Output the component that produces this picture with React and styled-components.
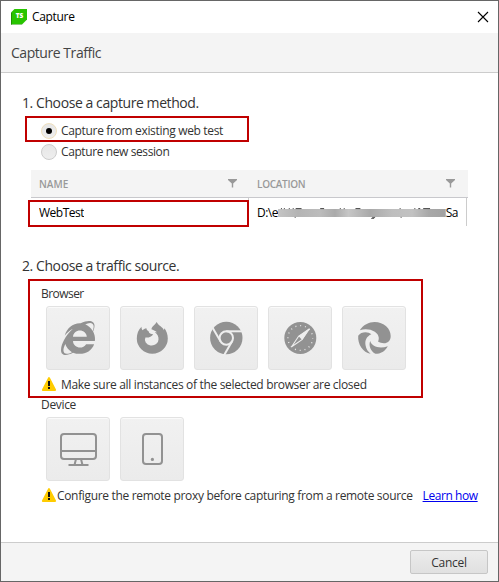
import React from 'react';
import styled, { createGlobalStyle } from 'styled-components';
import { FaInternetExplorer } from 'react-icons/fa';

const GlobalStyle = createGlobalStyle`
  * { box-sizing: border-box; }
  body { margin: 0; background: #fff; }
`;

const Dialog = styled.div`
  position: relative;
  display: flex;
  flex-direction: column;
  width: 499px;
  height: 582px;
  border: 1px solid #666;
  background: #fff;
  color: #333;
  font: 12px/16px 'Open Sans', 'Noto Sans', sans-serif;
  letter-spacing: -0.33px;
  white-space: nowrap;
  overflow: hidden;
`;

const TitleBar = styled.header`
  display: flex;
  align-items: center;
  flex: none;
  height: 32px;
  padding: 0 9px 0 10px;
  color: #000;
`;

const TitleText = styled.span`
  flex: 1;
  margin-left: 5px;
`;

const Logo = styled.span`
  display: flex;
  align-items: center;
  justify-content: center;
  width: 16px;
  height: 16px;
  margin-top: -1px;
  background: linear-gradient(135deg, #28c400 0 86%, #178400 86%);
  clip-path: polygon(4px 0, 16px 0, 16px 11px, 11px 16px, 0 16px, 0 4px);
  border-left: 1px solid #1c9200;
  border-bottom: 1px solid #1c9200;
  color: #fff;
  font-size: 6.5px;
  font-weight: 800;
  line-height: 8px;
  letter-spacing: 0;
`;

const Header = styled.div`
  flex: none;
  height: 40px;
  padding: 10px;
  border-bottom: 1px solid #ccc;
  background: #f4f4f4;
  color: #444;
  font-size: 14px;
  line-height: 20px;
  letter-spacing: -0.45px;
`;

const Content = styled.main`
  flex: 1;
  padding: 20px 0 0 21px;
`;

const Heading = styled.h2`
  margin: 0;
  font-size: 14px;
  font-weight: 400;
  line-height: 20px;
  letter-spacing: -0.42px;
`;

const SecondStep = styled.div`
  padding-top: 30px;
`;

const RadioList = styled.div`
  display: flex;
  flex-direction: column;
  gap: 5px;
  padding: 10px 0 0 19px;
`;

const RadioRow = styled.label`
  display: flex;
  align-items: center;
  gap: 4px;
  height: 16px;
  letter-spacing: ${(p) => p.$spacing};
`;

const RadioDot = styled.span`
  display: flex;
  align-items: center;
  justify-content: center;
  width: 16px;
  height: 16px;
  border: 1px solid ${(p) => (p.$on ? '#eedfbd' : '#ccc')};
  border-radius: 50%;
  background: linear-gradient(#e6e6e6, #eee);

  &::after {
    content: '';
    width: 6px;
    height: 6px;
    border-radius: 50%;
    background: ${(p) => (p.$on ? '#000' : 'transparent')};
  }
`;

const Table = styled.div`
  width: 437px;
  margin: 10px 0 0 9px;
`;

const TableHead = styled.div`
  display: grid;
  grid-template-columns: 218px 219px;
  height: 28px;
  border-bottom: 1px solid #c8c8cc;
  background: #f4f4f4;
`;

const HeadCell = styled.div`
  display: flex;
  align-items: center;
  justify-content: space-between;
  padding: ${(p) => p.$pad};
  color: #999;
  font-size: 10px;
  font-weight: 600;
  letter-spacing: ${(p) => p.$spacing};
`;

const TableRow = styled.div`
  display: grid;
  grid-template-columns: 218px 218px;
  height: 28px;
  color: #000;
`;

const Cell = styled.div`
  display: flex;
  align-items: center;
  padding: 2px 8px 0;
  border-right: 1px solid #ccc;
  letter-spacing: -0.5px;
`;

const CellText = styled.span`
  display: flex;
  align-items: center;
  overflow: hidden;
`;

const SourceGroup = styled.section`
  height: 111px;
  padding: 10px 0 0 19px;
`;

const GroupLabel = styled.div`
  height: 20px;
  line-height: 16px;
  letter-spacing: ${(p) => p.$spacing || '-0.33px'};
`;

const Tiles = styled.div`
  display: flex;
  gap: 10px;
  padding-left: 5px;
`;

const Tile = styled.button`
  display: flex;
  align-items: center;
  justify-content: center;
  width: 64px;
  height: 64px;
  padding: 0;
  border: 1px solid #e2e2e2;
  border-radius: 3px;
  background: linear-gradient(#f1f1f1, #ebebeb);
  box-shadow: inset 0 1px #fafafa;
  color: #929292;

  svg { flex: none; display: block; }
`;

const Notice = styled.div`
  display: flex;
  align-items: center;
  gap: ${(p) => p.$gap};
  height: 16px;
  margin-top: 6px;
  line-height: 16px;
  letter-spacing: -0.33px;
`;

const NoticeText = styled.span`
  padding-top: 1px;
`;

const HelpLink = styled.a`
  margin-left: 10px;
  padding-top: 1px;
  color: #0000ee;
  text-decoration: underline;
  letter-spacing: -0.43px;
`;

const Footer = styled.footer`
  display: flex;
  align-items: flex-start;
  justify-content: flex-end;
  flex: none;
  height: 39px;
  padding: 7px 10px 0 0;
  border-top: 1px solid #ccc;
  background: #f4f4f4;
`;

const CancelButton = styled.button`
  width: 78px;
  height: 24px;
  padding: 1px 0 0;
  border: 1px solid #c6c6c6;
  border-radius: 2px;
  background: linear-gradient(#ececec, #e0e0e0);
  color: #333;
  font: inherit;
  letter-spacing: -0.3px;
`;

const Highlight = styled.div`
  position: absolute;
  left: ${(p) => p.$x}px;
  top: ${(p) => p.$y}px;
  width: ${(p) => p.$w}px;
  height: ${(p) => p.$h}px;
  border: 2px solid #c00000;
  pointer-events: none;
`;

const CloseIcon = () => (
  <svg width="12" height="12" viewBox="0 0 12 12" stroke="#000" strokeWidth="1.1">
    <path d="M1 1 11 11M11 1 1 11" />
  </svg>
);

const FilterIcon = () => (
  <svg width="9" height="9" viewBox="0 0 9 9" fill="#999">
    <path d="M0 0H9V1L5.2 4.5V8.5H3.8V4.5L0 1Z" />
  </svg>
);

const WarningIcon = () => (
  <svg width="16" height="16" viewBox="0 0 16 16">
    <path d="M8 2 14.2 14H1.8Z" fill="#ffcc00" stroke="#ffcc00" strokeWidth="1.8" strokeLinejoin="round" />
    <path d="M8 5V10M8 11V13" stroke="#111" strokeWidth="2" />
  </svg>
);

const RedactedPath = () => (
  <svg width="171" height="16" viewBox="0 0 171 16">
    <defs>
      <linearGradient id="smudge">
        <stop offset="0" stopColor="#c4c4c4" />
        <stop offset=".12" stopColor="#b4b4b4" />
        <stop offset=".25" stopColor="#bcbcbc" />
        <stop offset=".34" stopColor="#aaa" />
        <stop offset=".42" stopColor="#c6c6c6" />
        <stop offset=".55" stopColor="#a9a9a9" />
        <stop offset=".68" stopColor="#bebebe" />
        <stop offset=".8" stopColor="#c2c2c2" />
        <stop offset=".9" stopColor="#a8a8a8" />
        <stop offset="1" stopColor="#a2a2a2" />
      </linearGradient>
    </defs>
    <path d="M0 4H171V12H0Z" fill="url(#smudge)" />
    <path d="M3 3.5H4M6 3.5H7M11 3.5H12M15 3.5H16M18 3.5H24M43 3.5H47M63 3.5H64M67 3.5H68M79 3.5H84M124 3.5H125M139 3.5H140M143 3.5H145M148 3.5H155" stroke="#444" />
    <path d="M17 12.5H18M96 12.5H99M95 13.5H98M125 12.5H126" stroke="#555" />
  </svg>
);

const FirefoxIcon = () => (
  <svg width="60" height="60" viewBox="0 0 60 60" fill="currentColor">
    <path d="M19.5 18.7C16.3 21.5 14.8 26 14.8 30.5A15.5 15.2 0 0 0 45.8 30.5C45.8 26.5 44.3 22.5 42.4 20.3L41.9 22.3C40.8 18.8 36.6 18 34.6 14C33 17.3 30.3 17.6 29.4 21.3C31 22 33.4 22.8 35 24.2L32.8 24.2C35.5 26 36.8 28.8 36.5 31.5A6.8 5.9 0 1 1 23.4 29.4C26 30 29.5 29 31.2 26.2C28.8 26.2 27 25.4 26.6 23.2C25.6 22.6 24.3 21.8 24.4 20.3C22.8 20.4 21.5 21.2 20.8 22.3C19.8 21.5 19.4 20.2 19.5 18.7Z" />
  </svg>
);

const ChromeIcon = () => (
  <svg width="60" height="60" viewBox="0 0 60 60">
    <circle cx="30.3" cy="30" r="16.2" fill="currentColor" />
    <g fill="none" stroke="#eee" strokeWidth="2">
      <circle cx="30.3" cy="30" r="6.7" />
      <path d="M30.3 23.3H47" />
      <path d="M30.3 23.3H47" transform="rotate(120 30.3 30)" />
      <path d="M30.3 23.3H47" transform="rotate(240 30.3 30)" />
    </g>
  </svg>
);

const SafariIcon = () => (
  <svg width="60" height="60" viewBox="0 0 60 60">
    <circle cx="30.3" cy="30" r="16" fill="currentColor" />
    <circle cx="30.3" cy="30" r="12.4" fill="none" stroke="#e8e8e8" strokeWidth="1.3" strokeDasharray="1 3.87" strokeDashoffset=".5" />
    <path d="M39.5 20.8 32.2 31.9 28.4 28.1Z" fill="#eee" />
    <path d="M39.5 20.8 32 31.7 21.6 38.7 28.6 28.3Z" fill="none" stroke="#eee" strokeWidth="1.1" />
  </svg>
);

const SwirlIcon = () => (
  <svg width="60" height="60" viewBox="0 0 60 60" fill="currentColor">
    <path d="M15.8 22.3C19 17 25 14 30.5 14C40 14 46.7 20.5 46.7 28C46.7 33 43.5 35.3 40 35.3C37.8 35.3 35.8 34.8 34 33.6C36 30 34.2 26 30.8 23.8C26.5 21 20.5 20.6 15.8 22.3Z" />
    <path d="M14.2 27.8C17 23.5 24 23.3 27.4 26.3C22.6 28.3 20.6 32.5 21.6 37.5C22.2 41 24 43.7 26.6 45.8C19 44.6 13.5 36.5 14.2 27.8Z" />
    <path d="M26.2 33C27.8 38.6 35.5 41.2 43.8 38.2C41.2 43.3 36.5 45.8 31.4 45.8C26.5 43 24.4 37.5 26.2 33Z" />
  </svg>
);

const DesktopIcon = () => (
  <svg width="60" height="60" viewBox="0 0 60 60" fill="none" stroke="currentColor" strokeWidth="2">
    <rect x="13" y="15" width="35" height="25" rx="3" />
    <path d="M13 32H48M28 40 26.5 46M33 40 34.5 46M20.5 46H40.5" />
  </svg>
);

const PhoneIcon = () => (
  <svg width="60" height="60" viewBox="0 0 60 60" fill="none" stroke="currentColor" strokeWidth="2">
    <rect x="21" y="15" width="19" height="30" rx="3" />
    <circle cx="30.4" cy="40.4" r="1.6" fill="currentColor" stroke="none" />
  </svg>
);

const browsers = [
  ['Internet Explorer', <FaInternetExplorer size={34} />],
  ['Firefox', <FirefoxIcon />],
  ['Chrome', <ChromeIcon />],
  ['Safari', <SafariIcon />],
  ['Edge', <SwirlIcon />],
];

const devices = [
  ['Desktop', <DesktopIcon />],
  ['Phone', <PhoneIcon />],
];

const TileRow = ({ items }) => (
  <Tiles>
    {items.map(([name, icon]) => (
      <Tile key={name} aria-label={name}>{icon}</Tile>
    ))}
  </Tiles>
);

export default function App() {
  return (
    <Dialog>
      <GlobalStyle />
      <TitleBar>
        <Logo>TS</Logo>
        <TitleText>Capture</TitleText>
        <CloseIcon />
      </TitleBar>
      <Header>Capture Traffic</Header>
      <Content>
        <Heading>1. Choose a capture method.</Heading>
        <RadioList>
          <RadioRow $spacing="-0.33px"><RadioDot $on />Capture from existing web test</RadioRow>
          <RadioRow $spacing="-0.4px"><RadioDot />Capture new session</RadioRow>
        </RadioList>
        <Table>
          <TableHead>
            <HeadCell $pad="0 12px 0 8px" $spacing="0">NAME<FilterIcon /></HeadCell>
            <HeadCell $pad="0 13px 0 8px" $spacing="-0.3px">LOCATION<FilterIcon /></HeadCell>
          </TableHead>
          <TableRow>
            <Cell><CellText>WebTest</CellText></Cell>
            <Cell><CellText>D:\e<RedactedPath />Sa</CellText></Cell>
          </TableRow>
        </Table>
        <SecondStep>
          <Heading>2. Choose a traffic source.</Heading>
        </SecondStep>
        <SourceGroup>
          <GroupLabel $spacing="-0.55px">Browser</GroupLabel>
          <TileRow items={browsers} />
          <Notice $gap="4px">
            <WarningIcon />
            <NoticeText>Make sure all instances of the selected browser are closed</NoticeText>
          </Notice>
        </SourceGroup>
        <SourceGroup>
          <GroupLabel>Device</GroupLabel>
          <TileRow items={devices} />
          <Notice $gap="0">
            <WarningIcon />
            <NoticeText>Configure the remote proxy before capturing from a remote source</NoticeText>
            <HelpLink>Learn how</HelpLink>
          </Notice>
        </SourceGroup>
      </Content>
      <Footer>
        <CancelButton>Cancel</CancelButton>
      </Footer>
      <Highlight $x={24} $y={115} $w={224} $h={26} />
      <Highlight $x={27} $y={199} $w={221} $h={27} />
      <Highlight $x={27} $y={278} $w={395} $h={119} />
    </Dialog>
  );
}
